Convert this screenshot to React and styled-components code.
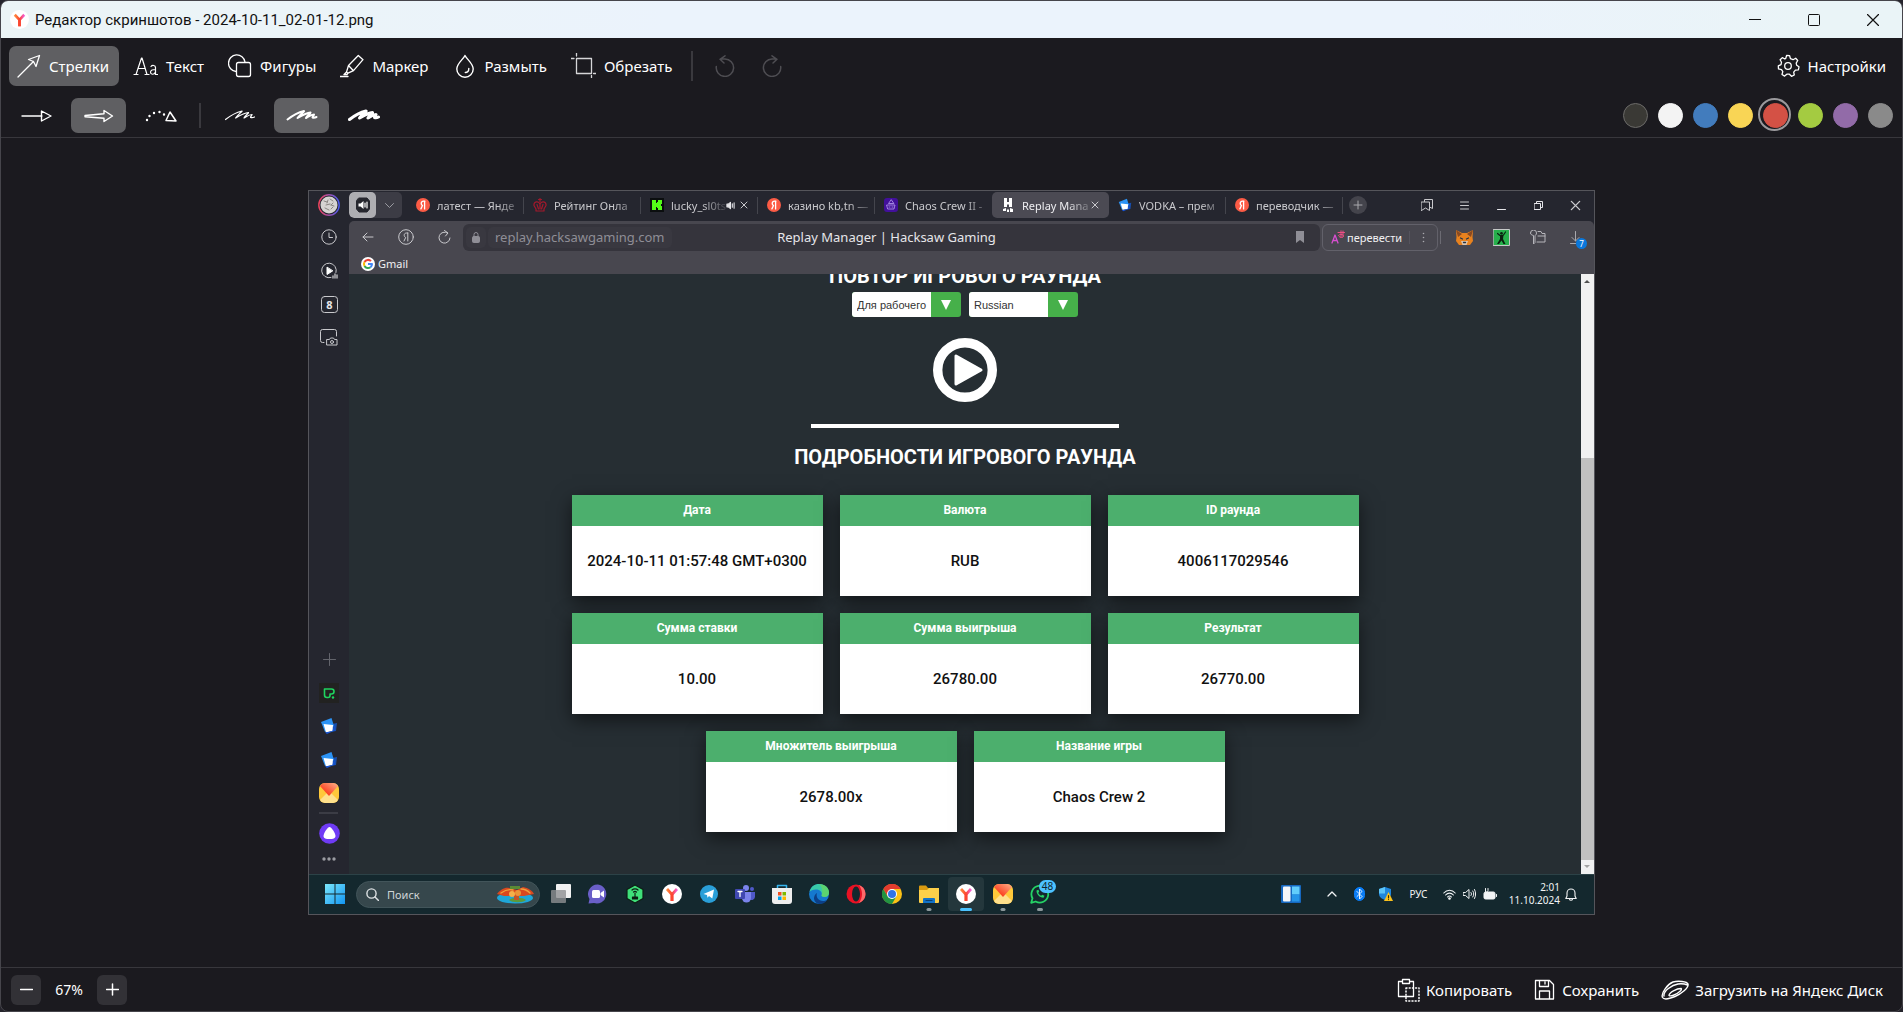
import React from 'react';

import styled, { createGlobalStyle, css } from 'styled-components';

const uiFont = '"Noto Sans", "Open Sans", sans-serif';

const GlobalStyle = createGlobalStyle`
  * {
    box-sizing: border-box;
  }
  body {
    margin: 0;
    background: #25242c;
    font-family: ${uiFont};
  }
  button {
    padding: 0;
    border: 0;
    background: none;
    color: inherit;
    font: inherit;
    cursor: pointer;
  }
  a {
    color: inherit;
    text-decoration: none;
  }
  svg {
    display: block;
    flex: none;
  }
`

/* ---------- editor window ---------- */

const Window = styled.div`
  display: flex;
  flex-direction: column;
  height: 100vh;
  border: 1px solid #46454b;
  border-radius: 8px;
  overflow: hidden;
  background: #1b1a1f;
  color: #fff;
`

const TitleBar = styled.header`
  display: flex;
  align-items: center;
  flex: none;
  height: 37px;
  padding-left: 9px;
  background: linear-gradient(100deg, #ebf4f6 0%, #ebf4f8 15%, #ebf3fc 35%, #ebf3fc 75%, #eaf4f7 95%);
  color: #111;
`

const WindowTitle = styled.h1`
  flex: 1;
  margin: 0 0 0 6px;
  font-family: Roboto, sans-serif;
  font-size: 15px;
  font-weight: 400;
`

const WindowButton = styled.button`
  display: flex;
  align-items: center;
  justify-content: center;
  width: 59px;
  height: 36px;
`

const Toolbars = styled.div`
  flex: none;
  padding: 8px 8px 0;
  height: 100px;
  border-bottom: 1px solid #38373c;
`

const Row = styled.div`
  display: flex;
  align-items: center;
  height: ${props => props.$h}px;
  margin-bottom: 12px;
`

const Tool = styled.button`
  display: flex;
  align-items: center;
  gap: 8px;
  height: 40px;
  margin-right: 6px;
  padding: 0 10px 1px 8px;
  border-radius: 7px;
  font-size: 15px;
  white-space: nowrap;

  ${props => props.$active && css`
    background: #5f5f62;
  `}
`

const Settings = styled(Tool)`
  margin-right: 0;
  padding-right: 8px;
`

const Variant = styled.button`
  display: flex;
  align-items: center;
  justify-content: center;
  width: 55px;
  height: 35px;
  margin-right: 7px;
  border-radius: 7px;

  ${props => props.$active && css`
    background: #5f5f62;
  `}
`

const Divider = styled.span`
  width: 2px;
  height: ${props => props.$h}px;
  margin: 0 ${props => props.$right}px 0 ${props => props.$left}px;
  background: #3a393e;
`

const Spacer = styled.span`
  flex: 1;
`

const HistoryButton = styled.button`
  display: flex;
  align-items: center;
  justify-content: center;
  width: 47px;
  height: 40px;
  color: #4e4d52;
`

const Swatches = styled.div`
  display: flex;
  align-items: center;
  align-self: flex-start;
  gap: 2px;
  margin-right: -2px;
`

const Swatch = styled.button`
  width: 33px;
  height: 33px;
  border: 2px solid ${props => (props.$active ? '#9a999c' : 'transparent')};
  border-radius: 50%;
  padding: 3px;

  &::before {
    content: '';
    display: block;
    width: 23px;
    height: 23px;
    border-radius: 50%;
    background: ${props => props.$color};
    border: 1px solid ${props => props.$edge || props.$color};
  }
`

const Canvas = styled.main`
  display: flex;
  flex: 1;
  align-items: center;
  justify-content: center;
  min-height: 0;
`

const BottomBar = styled.footer`
  display: flex;
  align-items: center;
  flex: none;
  height: 44px;
  padding: 0 19px 0 10px;
  border-top: 1px solid #38373c;
  font-size: 15px;
`

const ZoomButton = styled.button`
  display: flex;
  align-items: center;
  justify-content: center;
  width: 30px;
  height: 30px;
  border-radius: 6px;
  background: #323136;
`

const ZoomValue = styled.output`
  width: 56px;
  text-align: center;
  font-size: 14px;
`

const Action = styled.button`
  display: flex;
  align-items: center;
  gap: 6px;
  margin-left: 22px;
  white-space: nowrap;
`

/* ---------- captured desktop ---------- */

const Shot = styled.section`
  display: flex;
  flex-direction: column;
  width: 67.7%;
  aspect-ratio: 71 / 40;
  border: 1px solid #55555b;
  background: #25262f;
  font-size: 11px;
`

const Browser = styled.div`
  display: flex;
  flex: 1;
  min-height: 0;
`

const SideBar = styled.nav`
  display: flex;
  flex-direction: column;
  flex: none;
  width: 40px;
  background: #25262f;
`

const SideButton = styled.button`
  display: flex;
  align-items: center;
  justify-content: center;
  width: 40px;
  height: ${props => props.$h || 34}px;
`

const SideLine = styled.span`
  width: 19px;
  height: 2px;
  margin: 2px 10px 8px;
  background: #3b3c45;
`

const BrowserMain = styled.div`
  display: flex;
  flex-direction: column;
  flex: 1;
  min-width: 0;
`

const TabStrip = styled.div`
  display: flex;
  align-items: center;
  flex: none;
  height: 30px;
  padding: 0 0 1px;
`

const SoundGroup = styled.div`
  display: flex;
  width: 53px;
  height: 26px;
  margin-right: 5px;
  border-radius: 5px;
  overflow: hidden;
  background: #3c3c45;
`

const SoundButton = styled.button`
  display: flex;
  align-items: center;
  justify-content: center;
  width: ${props => (props.$light ? 27 : 26)}px;
  border-radius: ${props => (props.$light ? 5 : 0)}px;
  background: ${props => (props.$light ? '#aeaeb2' : 'none')};
`

const TabItem = styled.a`
  display: flex;
  align-items: center;
  width: 117px;
  height: 26px;
  padding: 0 3px 0 9px;
  color: #c9c9cd;
  background: linear-gradient(#44454d, #44454d) right center / 1px 17px no-repeat;

  ${props => props.$bare && css`
    background: none;
  `}

  ${props => props.$active && css`
    background: #4b4a53;
    border-radius: 5px;
    color: #ededf0;
  `}
`

const TabText = styled.span`
  flex: 1;
  margin-left: 7px;
  white-space: nowrap;
  mask-image: linear-gradient(90deg, #000 0, #000 calc(100% - 24px), rgba(0, 0, 0, 0.15) 100%);
`

const TabIcons = styled.span`
  display: flex;
  align-items: center;
  gap: 5px;
  margin-right: 7px;
`

const NewTab = styled.button`
  display: flex;
  align-items: center;
  justify-content: center;
  width: 18px;
  height: 18px;
  margin-left: 6px;
  border-radius: 50%;
  background: #44444c;
`

const Cell = styled.button`
  position: relative;
  display: flex;
  align-items: center;
  justify-content: center;
  width: ${props => props.$w || 37}px;
  height: 28px;
`

const Badge = styled.span`
  position: absolute;
  top: 15px;
  left: 19px;
  width: 11px;
  height: 11px;
  border-radius: 50%;
  background: #0a78dc;
  color: #fff;
  font-size: 8px;
  line-height: 11px;
  text-align: center;
`

const NavBar = styled.div`
  display: flex;
  align-items: center;
  flex: none;
  height: 33px;
  background: #48474f;
  border-radius: 5px 5px 0 0;
`

const Address = styled.div`
  display: grid;
  grid-template-columns: 1fr auto 1fr;
  align-items: center;
  flex: 1;
  height: 27px;
  padding: 0 13px 0 3px;
  border-radius: 6px;
  background: #35343c;
  font-size: 13px;
`

const Site = styled.div`
  display: flex;
  align-items: center;
  gap: 2px;
  color: #8f8e96;
`

const LockBox = styled.span`
  display: flex;
  align-items: center;
  justify-content: center;
  width: 20px;
  height: 21px;
  border-radius: 5px;
  background: #393840;
`

const Domain = styled.span`
  padding: 0 7px;
  border-radius: 5px;
  background: #393840;
  line-height: 21px;
`

const AddressTitle = styled.span`
  color: #e6e6ea;
  white-space: nowrap;
`

const AddressMark = styled.button`
  justify-self: end;
`

const Translate = styled.button`
  display: flex;
  align-items: center;
  width: 116px;
  height: 27px;
  margin-left: 2px;
  padding-left: 8px;
  border: 1px solid #62616a;
  border-radius: 6px;
  color: #f0f0f2;
`

const TranslateText = styled.span`
  flex: 1;
  padding-left: 2px;
  text-align: left;
`

const TranslateMore = styled.span`
  display: flex;
  justify-content: center;
  width: 28px;
  border-left: 1px solid #55545d;
`

const NavLine = styled.span`
  width: 1px;
  height: 13px;
  margin: 0 5px 0 2px;
  background: #6c6b73;
`

const Bookmarks = styled.div`
  display: flex;
  align-items: flex-start;
  flex: none;
  height: 20px;
  padding-left: 12px;
  background: #48474f;
`

const Bookmark = styled.a`
  display: flex;
  align-items: center;
  gap: 3px;
  height: 20px;
  color: #f0f0f2;
`

/* ---------- web page ---------- */

const Viewport = styled.div`
  display: flex;
  flex: 1;
  min-height: 0;
`

const Page = styled.div`
  display: flex;
  flex-direction: column;
  align-items: center;
  justify-content: flex-end;
  flex: 1;
  padding-bottom: 42px;
  overflow: hidden;
  background: #262e33;
  font-family: Roboto, sans-serif;
`

const Heading = styled.h2`
  flex: none;
  margin: 0;
  font-size: 20px;
  font-weight: 700;
  line-height: 24px;
  text-transform: uppercase;
`

const Selects = styled.div`
  display: flex;
  flex: none;
  gap: 8px;
  margin: 4px 0 21px;
`

const SelectBox = styled.label`
  display: flex;
  align-items: center;
  width: 109px;
  height: 25px;
  border-radius: 3px;
  overflow: hidden;
  background: #46b04a;
`

const Select = styled.select`
  width: 79px;
  height: 25px;
  padding: 0 0 0 5px;
  border: 0;
  border-radius: 0;
  background: #fff;
  color: #333;
  font: 11px "Liberation Sans", Arial, sans-serif;
  appearance: none;
`

const SelectArrow = styled.svg`
  margin: 0 auto;
`

const PlayButton = styled.button`
  flex: none;
  margin-bottom: 22px;
`

const Rule = styled.hr`
  flex: none;
  width: 25%;
  height: 4px;
  margin: 0 0 17px;
  border: 0;
  background: #fff;
`

const Cards = styled.dl`
  display: flex;
  flex-wrap: wrap;
  flex: none;
  justify-content: center;
  gap: 17px;
  max-width: 800px;
  margin: 26px 0 0;
`

const CardBox = styled.div`
  width: 251px;
  background: #fff;
  box-shadow: 0 6px 18px rgba(0, 0, 0, 0.55);
  text-align: center;
`

const CardLabel = styled.dt`
  background: #4caf6d;
  color: #fff;
  font-size: 12px;
  font-weight: 700;
  line-height: 31px;
`

const CardValue = styled.dd`
  margin: 0;
  color: #111;
  font-size: 15px;
  font-weight: 500;
  line-height: 70px;
`

const ScrollBar = styled.div`
  display: flex;
  flex-direction: column;
  align-items: center;
  justify-content: space-between;
  flex: none;
  width: 13px;
  padding: 6px 0;
  background: #f1f1f1;
`

const Thumb = styled.span`
  flex: 1;
  width: 100%;
  margin: 175px 0 5px;
  background: #c1c1c1;
`

/* ---------- taskbar ---------- */

const TaskBar = styled.div`
  display: flex;
  align-items: center;
  flex: none;
  height: 40px;
  padding: 0 11px 1px 16px;
  border-top: 1px solid #2c4247;
  background: #14282e;
`

const Search = styled.label`
  display: flex;
  align-items: center;
  width: 184px;
  height: 27px;
  margin: 0 3px 0 11px;
  padding: 0 4px 0 9px;
  border: 1px solid #42555a;
  border-radius: 14px;
  background: #36474c;
`

const SearchInput = styled.input`
  flex: 1;
  min-width: 0;
  margin-left: 8px;
  padding: 0;
  border: 0;
  outline: 0;
  background: none;
  color: #fff;
  font: 11px ${uiFont};

  &::placeholder {
    color: #cfd5d7;
    opacity: 1;
  }
`

const Apps = styled.div`
  display: flex;
  width: 515px;
`

const AppButton = styled.button`
  position: relative;
  display: flex;
  flex: 1;
  align-items: center;
  justify-content: center;
  height: 34px;
  border-radius: 4px;

  ${props => props.$active && css`
    background: #24373c;
  `}

  &::after {
    content: '';
    position: absolute;
    bottom: 0;
    left: 50%;
    width: ${props => props.$mark || 0}px;
    height: 3px;
    transform: translateX(-50%);
    border-radius: 2px;
    background: ${props => (props.$active ? '#4cc2ff' : '#8b979a')};
  }
`

const Count = styled.span`
  position: absolute;
  top: 3px;
  right: 2px;
  width: 17px;
  height: 13px;
  border-radius: 7px;
  background: #4cc2ff;
  color: #10242c;
  font-size: 10px;
  line-height: 13px;
`

const Tray = styled.div`
  display: flex;
  align-items: center;
  margin-left: 9px;
`

const Lang = styled.button`
  width: 40px;
  padding-right: 3px;
  color: #f2f4f5;
  font-size: 10px;
`

const Clock = styled.time`
  width: 60px;
  color: #f2f4f5;
  font-size: 10px;
  line-height: 13px;
  text-align: right;
`

/* ---------- icons ---------- */

const Icon = ({ w = 24, h = w, vb = `0 0 ${w} ${h}`, stroke = 'currentColor', sw = 1, fill = 'none', children }) => (
  <svg
    width={w}
    height={h}
    viewBox={vb}
    stroke={stroke}
    strokeWidth={sw}
    fill={fill}
    strokeLinecap="round"
    strokeLinejoin="round"
    aria-hidden="true"
  >
    {children}
  </svg>
)

const YaTab = ({ size = 14 }) => (
  <Icon w={size} vb="0 0 14 14" stroke="none">
    <circle cx="7" cy="7" r="7" fill="#fc5b45" />
    <path d="M8.9 3.2H7.6C6.2 3.2 5.2 4 5.2 5.4c0 1 .5 1.6 1.3 2.1L4.9 10.9M8.6 3.2v7.7" stroke="#fff" strokeWidth="1.3" fill="none" />
  </Icon>
)

const YBrowser = ({ size = 20 }) => (
  <Icon w={size} vb="0 0 20 20" stroke="none">
    <defs>
      <linearGradient id="ybr" x1="0" y1="0" x2="1" y2="0">
        <stop offset="0" stopColor="#ff8a3c" />
        <stop offset="0.5" stopColor="#fb4630" />
        <stop offset="1" stopColor="#f560d8" />
      </linearGradient>
    </defs>
    <circle cx="10" cy="10" r="10" fill="#fff" />
    <path d="M5 5l5 5.5L15 5M10 10.5V17" stroke="url(#ybr)" strokeWidth="2.8" strokeLinecap="butt" fill="none" />
    <path d="M10 10v7" stroke="#fb4630" strokeWidth="2.8" strokeLinecap="butt" />
  </Icon>
)

const BlueCards = ({ size = 18 }) => (
  <Icon w={size} vb="0 0 18 18" stroke="none">
    <path d="M12 7l5-1-1 8-5 1z" fill="#174fb0" />
    <path d="M1 5l10.5-4L14 9l-9 6z" fill="#2c93f5" />
    <path d="M3.5 7l9.5 1-.5 6L6 15.500z" fill="#fff" />
    <path d="M5 15.500l7.500-1.500 2-6 .2 5.500L7 17z" fill="#1554d8" />
  </Icon>
)

const Mail = ({ size = 20 }) => (
  <Icon w={size} vb="0 0 20 20" stroke="none">
    <defs>
      <linearGradient id="mail" x1="0" y1="1" x2="1" y2="0">
        <stop offset="0.3" stopColor="#fb4424" />
        <stop offset="1" stopColor="#ffb08a" />
      </linearGradient>
    </defs>
    <rect width="20" height="20" rx="6" fill="#ffc83a" />
    <path d="M1 17L8 10h4l7 7a6 6 0 0 1-5 3H6a6 6 0 0 1-5-3z" fill="#ffe08c" />
    <path d="M1 3a6 6 0 0 1 5-3h8a6 6 0 0 1 5 3l-9 10z" fill="url(#mail)" />
  </Icon>
)

const Cross = ({ size = 8, color = '#c9c9cd' }) => (
  <Icon w={size} vb="0 0 8 8" stroke={color}><path d="M1 1l6 6M7 1L1 7" /></Icon>
)

const Speaker = ({ size = 9, color = '#e6e6ea' }) => (
  <Icon w={size} vb="0 0 10 10" stroke={color} sw="1.2">
    <path d="M1 3.5h1.500L5 1.500v7L2.500 6.500H1z" fill={color} />
    <path d="M7 3v4M9 2v6" />
  </Icon>
)

const ArrowTool = () => (
  <Icon sw="1.3"><path d="M1 23L16.500 7.500M11.500 5.500L22.500 1.500l-3.500 11-2.500-5z" /></Icon>
)

const TextTool = () => (
  <Icon w={25} h={24} sw="1.2">
    <path d="M1 20.500h4M3 20.500L8.500 4h.5L14 20.500M12 20.500h4M5 14.500h7M18 12.500c1-1.500 4.500-1.500 4.500 1v7h2M22.500 15.500c-2 0-5 .5-5 2.800s3.500 3 5-.3" />
  </Icon>
)

const ShapesTool = () => (
  <Icon sw="1.3">
    <path d="M8 17.500A8.300 8.300 0 1 1 17 8" />
    <rect x="8.500" y="8.500" width="14" height="14" rx="2" />
  </Icon>
)

const MarkerTool = () => (
  <Icon sw="1.3">
    <path d="M0 22.500h8M8.500 11.500L18.300 1.500l4.700 4.200-9.500 11zM8.500 11.500L6.500 18l1.500 1.200 5.500-2.500M6.500 18L4 20.500h3l1-1.300" />
  </Icon>
)

const BlurTool = () => (
  <Icon sw="1.4">
    <path d="M12 1.500C10 5.500 3.800 9.500 3.800 15a8.200 8.200 0 0 0 16.400 0C20.200 9.500 14 5.500 12 1.500z" />
    <path d="M15.800 14.500c0 2.500-1.300 4-3.500 4" />
  </Icon>
)

const CropTool = () => (
  <Icon w={25} h={25} sw="1.3" stroke="#d6d6d8">
    <rect x="5.500" y="5.500" width="15" height="15" />
    <path d="M5.500 0v3M0 5.500h3M20.500 22.500v2.500M22.500 20.500h2.500" />
  </Icon>
)

const Undo = () => (
  <Icon w={20} h={22} sw="1.5">
    <path d="M1.300 11.500a8.700 8.700 0 1 0 8.700-7.500H6M10 .8L5 4.300 9 8" />
  </Icon>
)

const Redo = () => (
  <Icon w={20} h={22} sw="1.5">
    <path d="M18.700 11.500A8.700 8.700 0 1 1 10 4h4M10 .8l5 3.500L11 8" />
  </Icon>
)

const Gear = () => (
  <Icon sw="1.3">
    <circle cx="12" cy="12" r="3.300" />
    <path d="M9.800 4.300L10.600 1.500l3 .2.9 3 2.500 1 2.700-1.500 2 2.300-1.500 2.600.5 2.200 2.300 1.500-.6 3-3 .3-1.700 2 .6 2.900-2.800 1.300-2.100-2.100h-2.600l-2.200 1.900-2.600-1.600.8-2.900-1.300-2-3-.7-.2-3 2.700-1.300.5-2.400-1.400-2.500 2.200-2 2.600 1.300z" />
  </Icon>
)

const Scribble = ({ width }) => (
  <Icon w={32} h={14} sw={width}>
    <path d="M1.500 10.500C6 7 12 3.500 18 2c1 0-4 3.500-6.500 7C15 7 20 4 24.500 3.500 25 4 21.500 6 20 9c2-1 5-3.500 8-3.500.5.5-1.500 1.500-1.500 3 1.500.5 3 0 4-.5" />
  </Icon>
)

const variants = [
  <Icon w={32} h={14} sw="1.4"><path d="M1 7h20M20.500 2v10L30 7z" /></Icon>,
  <Icon w={30} h={14} sw="1.4"><path d="M1 6.500L20 4.800V1.500L28.500 7 20 12.500V9.200L1 7.800z" /></Icon>,
  <Icon w={32} h={14}>
    <path d="M2 11h.01M4.500 7h.01M9 4h.01M14.500 3h.01M19 5.500h.01" strokeWidth="2.400" />
    <path d="M25 3l-4 8.500 10 .5z" strokeWidth="1.500" />
  </Icon>,
]

const colors = ['#3a3935', '#f3f3f3', '#427cbd', '#f9d555', '#d45145', '#a4cb41', '#926ba8', '#8a8a8a']

const tools = [
  ['Стрелки', <ArrowTool />],
  ['Текст', <TextTool />],
  ['Фигуры', <ShapesTool />],
  ['Маркер', <MarkerTool />],
  ['Размыть', <BlurTool />],
  ['Обрезать', <CropTool />],
]

const Crown = () => (
  <Icon w={14} stroke="#a3182c" sw="1.2">
    <path d="M7 3.500V.5M5.500 1.500h3M7 6C5.500 2.500.5 3.500 1 7.500L3 11v2h8v-2l2-3.500C13.500 3.500 8.500 2.500 7 6zM4 6.500L5.500 11M10 6.500L8.500 11M7 6v5" />
  </Icon>
)

const Kick = () => (
  <Icon w={14} stroke="none">
    <rect width="14" height="14" fill="#0b0e0f" />
    <path d="M2 2h4v3h1V4h1V2h4v4h-1v2h1v4H8v-2H7V9H6v3H2z" fill="#53fc18" />
  </Icon>
)

const Chaos = () => (
  <Icon w={14} stroke="#b9a2f0" sw="0.8">
    <rect width="14" height="14" rx="3" fill="#42109b" stroke="none" />
    <path d="M7 2L4.500 5.500h5zM3 7h8l-1 4H4zM5 9h1M8 9h1" />
  </Icon>
)

const Hacksaw = () => (
  <Icon w={14} stroke="none" fill="#fff">
    <path d="M3 0h3v4h2V0h3v9H8V6.500H6V9H3zM2 11l3-1v3H2zM6 11.500h2V14H6zM9 10l3 1v3H9z" />
  </Icon>
)

const tabs = [
  { title: 'латест — Янде', icon: <YaTab /> },
  { title: 'Рейтинг Онла', icon: <Crown /> },
  { title: 'lucky_sl0ts', icon: <Kick />, sound: true, close: true },
  { title: 'казино kb,tn —', icon: <YaTab /> },
  { title: 'Chaos Crew II -', icon: <Chaos />, bare: true },
  { title: 'Replay Mana', icon: <Hacksaw />, active: true, close: true },
  { title: 'VODKA – прем', icon: <BlueCards size={14} /> },
  { title: 'переводчик —', icon: <YaTab /> },
]

const cards = [
  ['Дата', '2024-10-11 01:57:48 GMT+0300'],
  ['Валюта', 'RUB'],
  ['ID раунда', '4006117029546'],
  ['Сумма ставки', '10.00'],
  ['Сумма выигрыша', '26780.00'],
  ['Результат', '26770.00'],
  ['Множитель выигрыша', '2678.00x'],
  ['Название игры', 'Chaos Crew 2'],
]

const apps = [
  { name: 'Task view', icon: (
    <Icon w={20} stroke="none">
      <rect x="5" y="0" width="15" height="14" rx="1" fill="#f1f1f1" />
      <rect x="0" y="6" width="15" height="13" rx="1" fill="#8e9092" fillOpacity="0.8" />
    </Icon>
  ) },
  { name: 'Chat', icon: (
    <Icon w={20} stroke="none">
      <path d="M10 .5A9.500 9.500 0 1 1 6 19l-5.500.5L1.500 15A9.500 9.500 0 0 1 10 .5z" fill="#6a5fc8" />
      <rect x="4" y="6" width="8" height="8" rx="1.500" fill="#fff" />
      <path d="M12.500 9l3.500-2.500v7L12.500 11z" fill="#fff" />
    </Icon>
  ) },
  { name: 'Router', icon: (
    <Icon w={20} stroke="#0d1f14" sw="1.2">
      <path d="M10 1l8 4.500v9L10 19l-8-4.500v-9z" fill="#3fe07a" />
      <path d="M7 6c1.500-1.500 4.500-1.500 6 0M8.500 8c.8-.7 2.200-.7 3 0M10 9v4" />
      <path d="M7.500 13h5v2h-5z" fill="#0d1f14" />
    </Icon>
  ) },
  { name: 'Yandex', icon: <YBrowser /> },
  { name: 'Telegram', icon: (
    <Icon w={18} stroke="none">
      <circle cx="9" cy="9" r="9" fill="#2a9fd8" />
      <path d="M3.500 9L14 4.500 12.300 13.500 9 11 7.500 12.700 7 10z" fill="#fff" />
    </Icon>
  ) },
  { name: 'Teams', icon: (
    <Icon w={20} stroke="none">
      <circle cx="11" cy="4" r="3" fill="#7b83eb" />
      <circle cx="17" cy="5" r="2" fill="#5059c9" />
      <path d="M14 8h6v5a3.500 3.500 0 0 1-6 2z" fill="#5059c9" />
      <path d="M7 8h9v6a4.500 4.500 0 0 1-9 0z" fill="#7b83eb" />
      <rect x="0" y="5" width="10" height="10" rx="1" fill="#4048b0" />
      <path d="M3 7.500h4M5 7.500v5" stroke="#fff" strokeWidth="1.3" />
    </Icon>
  ) },
  { name: 'Store', icon: (
    <Icon w={20} stroke="none">
      <path d="M5.500 5V1.500h9V5" stroke="#36b5ee" strokeWidth="1.5" fill="none" />
      <path d="M0 4h20v13a3 3 0 0 1-3 3H3a3 3 0 0 1-3-3z" fill="#eee" />
      <path d="M6 8h3.500v3.500H6z" fill="#f25022" />
      <path d="M10.500 8H14v3.500h-3.500z" fill="#7fba00" />
      <path d="M6 12.500h3.500V16H6z" fill="#00a4ef" />
      <path d="M10.500 12.500H14V16h-3.500z" fill="#ffb900" />
    </Icon>
  ) },
  { name: 'Edge', icon: (
    <Icon w={20} stroke="none">
      <circle cx="10" cy="10" r="10" fill="#1579cf" />
      <path d="M.5 8C2 2 6 0 10 0c6 0 10 4 10 8.500 0 3-2 4.500-4.500 4.500S12 12 12.800 10.500C13 7 10 5.500 7 5.500S1.500 6.500.5 8z" fill="#38c9a8" />
      <path d="M10 0c6 0 10 4 10 8.500 0 3-2 4.500-4.500 4.500S12 12 12.800 10.500 14 3 10 0z" fill="#6bd858" fillOpacity="0.7" />
      <path d="M8 9c-1.500 4 1.500 8 6 8 1.500 0 3-.5 4-1-2 3-5 4-7.500 4C6 19.500 4 15 5.500 12c.5-1.500 1.500-2.500 2.500-3z" fill="#0c3f86" />
    </Icon>
  ) },
  { name: 'Opera', icon: (
    <Icon w={20} stroke="none">
      <circle cx="10" cy="10" r="9.500" fill="#e81224" />
      <path d="M13 1c4 1.500 6.500 5 6.500 9s-2.500 7.500-6.500 9c2-3 3-6 3-9s-1-6-3-9z" fill="#ff6a6a" />
      <ellipse cx="10" cy="10" rx="4" ry="7.500" fill="#14282e" />
    </Icon>
  ) },
  { name: 'Chrome', icon: (
    <Icon w={20} stroke="none">
      <circle cx="10" cy="10" r="10" fill="#fbc116" />
      <path d="M1.300 5a10 10 0 0 1 17.400 0H10L5.700 12.500z" fill="#e33b2e" />
      <path d="M1.300 5A10 10 0 0 0 10 20l4.300-7.500H5.700z" fill="#229342" />
      <circle cx="10" cy="10" r="5" fill="#fff" />
      <circle cx="10" cy="10" r="4" fill="#2f74e8" />
    </Icon>
  ) },
  { name: 'Explorer', mark: 5, icon: (
    <Icon w={20} stroke="none">
      <path d="M0 2.500a1 1 0 0 1 1-1h6l2 2.500h11v6H0z" fill="#d99a10" />
      <path d="M0 6h8l2-2h10v14a1 1 0 0 1-1 1H1a1 1 0 0 1-1-1z" fill="#fcd04a" />
      <path d="M4 19v-4a1 1 0 0 1 1-1h10a1 1 0 0 1 1 1v4z" fill="#1273c8" />
      <path d="M7 16.500h6" stroke="#0b3f70" strokeWidth="1.2" />
    </Icon>
  ) },
  { name: 'Yandex Browser', mark: 12, active: true, icon: <YBrowser /> },
  { name: 'Mail', mark: 5, icon: <Mail /> },
  { name: 'WhatsApp', mark: 6, count: 48, icon: (
    <Icon w={20} stroke="#25d366" sw="1.8">
      <path d="M1.200 18.800l1.300-4.500A8.400 8.400 0 1 1 5.700 17.500z" />
      <path d="M6.500 6.500c0 4 3 7 7 7.300l1-2-2.300-1-1 1c-1.500-.6-2.500-1.600-3-3l1-1-.8-2z" fill="#25d366" stroke="none" />
    </Icon>
  ) },
]

const EditorToolbars = () => (
  <Toolbars>
    <Row $h={40}>
      {tools.map(([label, icon], i) => (
        <Tool key={label} $active={i === 0}>{icon}{label}</Tool>
      ))}
      <Divider $h={30} $left={3} $right={8} />
      <HistoryButton aria-label="Отменить"><Undo /></HistoryButton>
      <HistoryButton aria-label="Повторить"><Redo /></HistoryButton>
      <Spacer />
      <Settings><Gear />Настройки</Settings>
    </Row>
    <Row $h={35}>
      {variants.map((icon, i) => (
        <Variant key={i} aria-label={`Стрелка ${i + 1}`} $active={i === 1}>{icon}</Variant>
      ))}
      <Divider $h={25} $left={4} $right={11} />
      {[1.2, 2, 3].map((width, i) => (
        <Variant key={width} aria-label={`Толщина ${i + 1}`} $active={i === 1}>
          <Scribble width={width} />
        </Variant>
      ))}
      <Spacer />
      <Swatches>
        {colors.map((color, i) => (
          <Swatch
            key={color}
            aria-label={`Цвет ${i + 1}`}
            $color={color}
            $edge={i === 0 ? '#6b6a68' : undefined}
            $active={i === 4}
          />
        ))}
      </Swatches>
    </Row>
  </Toolbars>
)

const BrowserSide = () => (
  <SideBar>
    <SideButton $h={29} aria-label="Профиль">
      <Icon w={22} stroke="none">
        <defs>
          <linearGradient id="ring" x1="0" y1="0" x2="1" y2="0">
            <stop offset="0" stopColor="#f0435c" />
            <stop offset="1" stopColor="#4b5cf0" />
          </linearGradient>
        </defs>
        <circle cx="11" cy="11" r="10.200" stroke="url(#ring)" strokeWidth="1.4" />
        <circle cx="11" cy="11" r="8.500" fill="#d6d4d2" />
        <path d="M6 7l3 1M12 5l3 2M8 11l4-1M13 11l3 1M7 14l4 2M13 15l2-2M10 6l-1 3M15 9l-2 2" stroke="#8a8683" strokeWidth="1" />
      </Icon>
    </SideButton>
    <SideButton aria-label="История">
      <Icon w={16} stroke="#c9c9cd"><circle cx="8" cy="8" r="7.200" /><path d="M8 4v4.500h3.500" /></Icon>
    </SideButton>
    <SideButton aria-label="Видео">
      <Icon w={18} stroke="#c9c9cd">
        <path d="M11 15.500A7.300 7.300 0 1 1 16 10.500" />
        <path d="M7 5.500v7l5.500-3.500z" fill="#fff" stroke="#fff" />
        <path d="M13 16v-2M15 16v-4M17 16v-3" strokeWidth="1.3" />
      </Icon>
    </SideButton>
    <SideButton $h={33} aria-label="Табло">
      <Icon w={17} stroke="#c9c9cd">
        <rect x="0.500" y="0.500" width="16" height="16" rx="3" />
        <text x="8.500" y="12.500" textAnchor="middle" fontSize="11" fontWeight="700" fill="#e6e6ea" stroke="none">8</text>
      </Icon>
    </SideButton>
    <SideButton aria-label="Скриншот">
      <Icon w={18} h={17} stroke="#c9c9cd">
        <path d="M4 13.500H2.500a2 2 0 0 1-2-2v-9a2 2 0 0 1 2-2h12a2 2 0 0 1 2 2V7" />
        <path d="M7 10.500h2.500l1-1.500h3l1 1.500H17v5.500H7z" /><circle cx="12" cy="13" r="1.500" />
      </Icon>
    </SideButton>
    <Spacer />
    <SideButton $h={33} aria-label="Добавить">
      <Icon w={13} stroke="#63646c"><path d="M6.500.5v12M.5 6.500h12" /></Icon>
    </SideButton>
    <SideButton $h={33} aria-label="Сервис">
      <Icon w={20} stroke="none">
        <rect width="20" height="20" fill="#222221" />
        <path d="M8 14.500a2.500 2.500 0 0 1-2.500-2.500V6h7a2.500 2.500 0 0 1 0 5H11v1.500a2 2 0 0 1-2 2z" stroke="#1fd45f" strokeWidth="1.6" fill="none" />
        <circle cx="14" cy="14.500" r="1.200" fill="#1fd45f" />
      </Icon>
    </SideButton>
    <SideButton aria-label="VODKA"><BlueCards /></SideButton>
    <SideButton $h={33} aria-label="VODKA"><BlueCards /></SideButton>
    <SideButton aria-label="Почта"><Mail /></SideButton>
    <SideLine />
    <SideButton $h={22} aria-label="Алиса">
      <Icon w={21} stroke="none">
        <circle cx="10.500" cy="10.500" r="10.300" fill="#6f3bf5" />
        <path d="M10.500 4c2 0 6 6.500 6 9s-2.500 3-6 3-6-.5-6-3 4-9 6-9z" fill="#fff" />
      </Icon>
    </SideButton>
    <SideButton $h={30} aria-label="Ещё">
      <Icon w={14} h={4} stroke="none" fill="#9b9ca2">
        <circle cx="2" cy="2" r="1.700" /><circle cx="7" cy="2" r="1.700" /><circle cx="12" cy="2" r="1.700" />
      </Icon>
    </SideButton>
  </SideBar>
)

const Tabs = () => (
  <TabStrip>
    <SoundGroup>
      <SoundButton $light aria-label="Звук">
        <Icon w={16} stroke="none">
          <path d="M4 1h8l2.500 3v8L12 15H4l-2.500-3V4z" fill="#26272e" stroke="#26272e" />
          <path d="M3.500 6.500h2l3-2.500v8l-3-2.500h-2z" fill="#fff" />
          <path d="M10 6v4M12 5v6" stroke="#fff" strokeWidth="1.2" />
        </Icon>
      </SoundButton>
      <SoundButton aria-label="Список">
        <Icon w={9} h={5} stroke="#9b9ca2"><path d="M.5.5l4 4 4-4" /></Icon>
      </SoundButton>
    </SoundGroup>
    {tabs.map(({ title, icon, sound, close, active, bare }) => (
      <TabItem key={title} href="#tab" $active={active} $bare={bare}>
        {icon}
        <TabText>{title}</TabText>
        {close && (
          <TabIcons>
            {sound && <Speaker />}
            <Cross />
          </TabIcons>
        )}
      </TabItem>
    ))}
    <NewTab aria-label="Новая вкладка">
      <Icon w={10} stroke="#a9a9ae"><path d="M5 1v8M1 5h8" /></Icon>
    </NewTab>
    <Spacer />
    <Cell aria-label="Закладки">
      <Icon w={12} stroke="#c9c9cd"><path d="M3.500 2.500V.5h8v9L8.500 8M.5 3h8v8.500l-4-2.500-4 2.500z" /></Icon>
    </Cell>
    <Cell aria-label="Меню">
      <Icon w={9} stroke="#c9c9cd"><path d="M.5 1h8M.5 4.500h8M.5 8h8" /></Icon>
    </Cell>
    <Cell aria-label="Свернуть">
      <Icon w={9} stroke="#e6e6ea"><path d="M.5 8.500h8" /></Icon>
    </Cell>
    <Cell aria-label="Окно">
      <Icon w={9} stroke="#e6e6ea"><path d="M2.500 2.500v-2h6v6h-2M.5 2.500h6v6h-6z" /></Icon>
    </Cell>
    <Cell aria-label="Закрыть"><Cross size={11} /></Cell>
  </TabStrip>
)

const Navigation = () => (
  <NavBar>
    <Cell $w={38} aria-label="Назад">
      <Icon w={12} h={10} stroke="#c9c9cd"><path d="M11 5H1M5 1L1 5l4 4" /></Icon>
    </Cell>
    <Cell $w={38} aria-label="Яндекс">
      <Icon w={16} stroke="#c9c9cd">
        <circle cx="8" cy="8" r="7.300" />
        <path d="M9.800 4H8.500C7 4 6.200 5 6.200 6.200c0 1 .5 1.800 1.500 2.300L6 12M9.800 4v8" />
      </Icon>
    </Cell>
    <Cell $w={38} aria-label="Обновить">
      <Icon w={13} h={14} stroke="#c9c9cd"><path d="M9.500 3A5.500 5.500 0 1 0 12 8M6.500.5L10 3 7.500 6" /></Icon>
    </Cell>
    <Address>
      <Site>
        <LockBox>
          <Icon w={8} h={11} stroke="#8f8e96">
            <rect x="0.500" y="4.500" width="7" height="6" rx="1" fill="#8f8e96" />
            <path d="M2 4.500V2.500a2 2 0 0 1 4 0v2" />
          </Icon>
        </LockBox>
        <Domain>replay.hacksawgaming.com</Domain>
      </Site>
      <AddressTitle>Replay Manager | Hacksaw Gaming</AddressTitle>
      <AddressMark aria-label="В закладки">
        <Icon w={14} h={12} stroke="none"><path d="M3 0h8v12L7 9l-4 3z" fill="#8f8e96" /></Icon>
      </AddressMark>
    </Address>
    <Translate>
      <Icon w={14} stroke="#e04fb0" sw="1.3">
        <path d="M1 13l3-8 3 8M2 10.500h4" stroke="#d84fd0" />
        <path d="M7 2.500h6.500M10 .8v6M7.500 5.500c0-1.500 5-1.500 5 .5S9 8 8 6.500M12 1v5" strokeWidth="1" stroke="#f04f86" />
      </Icon>
      <TranslateText>перевести</TranslateText>
      <TranslateMore>
        <Icon w={3} h={13} stroke="none" fill="#a9a9ae">
          <circle cx="1.500" cy="2.500" r="0.800" /><circle cx="1.500" cy="6.500" r="0.800" /><circle cx="1.500" cy="10.500" r="0.800" />
        </Icon>
      </TranslateMore>
    </Translate>
    <NavLine />
    <Cell aria-label="MetaMask">
      <Icon w={17} h={15} stroke="none">
        <path d="M0 0l6 3h5l6-3-.5 7 .5 4-3 4H3l-3-4 .5-4z" fill="#e8821e" />
        <path d="M0 0l6 4-4 3zM17 0l-6 4 4 3z" fill="#8a4a22" />
        <path d="M5 11h7l-1.500 4h-4z" fill="#d9c4b0" />
        <path d="M4.500 8l2 1M12.500 8l-2 1M7.500 12.500h2" stroke="#233447" strokeWidth="1.3" />
      </Icon>
    </Cell>
    <Cell aria-label="Расширение">
      <Icon w={17} stroke="none">
        <rect x="0.500" y="0.500" width="16" height="16" fill="#27b04c" stroke="#c6c9c8" />
        <path d="M4.500 4.500L7 6.500l3.500-.5L12.500 3" stroke="#0b1f10" strokeWidth="1.2" fill="none" />
        <circle cx="8.500" cy="4.200" r="1.300" fill="#0b1f10" />
        <path d="M7 6h3.500l-.5 4 2.500 5h-2L8.500 11.500 6 15H4l3-5z" fill="#0b1f10" />
      </Icon>
    </Cell>
    <Cell aria-label="Пароли">
      <Icon w={16} h={15} stroke="#b5b5ba">
        <path d="M.5 3A2.500 2.500 0 0 1 6.500 3c0 1.500-.7 2-1.500 2.500v7L3.500 14V5.500C1.500 5 .5 4.500.5 3z" />
        <path d="M8 1.500h3l1 2h3v8.500H7M8 6h7" />
      </Icon>
    </Cell>
    <Cell aria-label="Загрузки">
      <Icon w={11} h={13} stroke="#a9a9ae"><path d="M5.500.5v9.500M2 6.500l3.500 3.500L9 6.500M.5 12.500h10" /></Icon>
      <Badge>7</Badge>
    </Cell>
  </NavBar>
)

const Dropdown = ({ label, value }) => (
  <SelectBox>
    <Select aria-label={label} defaultValue={value}>
      <option>{value}</option>
    </Select>
    <SelectArrow width="10" height="10" viewBox="0 0 10 10">
      <path d="M0 0h10L5 10z" fill="#fff" />
    </SelectArrow>
  </SelectBox>
)

const ReplayPage = () => (
  <Viewport>
    <Page>
      <Heading>Повтор игрового раунда</Heading>
      <Selects>
        <Dropdown label="Устройство" value="Для рабочего" />
        <Dropdown label="Язык" value="Russian" />
      </Selects>
      <PlayButton aria-label="Воспроизвести">
        <Icon w={64} stroke="#fff">
          <circle cx="32" cy="32" r="27.300" strokeWidth="9.400" />
          <path d="M23 18v28l25-14z" fill="#fff" strokeWidth="3" />
        </Icon>
      </PlayButton>
      <Rule />
      <Heading>Подробности игрового раунда</Heading>
      <Cards>
        {cards.map(([label, value]) => (
          <CardBox key={label}>
            <CardLabel>{label}</CardLabel>
            <CardValue>{value}</CardValue>
          </CardBox>
        ))}
      </Cards>
    </Page>
    <ScrollBar>
      <Icon w={6} h={3} stroke="none" fill="#505050"><path d="M0 3h6L3 0z" /></Icon>
      <Thumb />
      <Icon w={6} h={3} stroke="none" fill="#a3a3a3"><path d="M0 0h6L3 3z" /></Icon>
    </ScrollBar>
  </Viewport>
)

const WindowsTaskBar = () => (
  <TaskBar>
    <button aria-label="Пуск">
      <Icon w={20} stroke="none">
        <defs>
          <linearGradient id="win" x1="0" y1="0" x2="1" y2="1">
            <stop offset="0" stopColor="#7ce8fb" />
            <stop offset="1" stopColor="#1295f2" />
          </linearGradient>
        </defs>
        <path d="M0 0h9.500v9.500H0zM10.500 0H20v9.500h-9.500zM0 10.500h9.500V20H0zM10.500 10.500H20V20h-9.500z" fill="url(#win)" />
      </Icon>
    </button>
    <Search>
      <Icon w={13} stroke="#dfe3e5" sw="1.4"><circle cx="5.500" cy="5.500" r="4.600" /><path d="M9 9l3.500 3.500" /></Icon>
      <SearchInput placeholder="Поиск" aria-label="Поиск" />
      <Icon w={39} h={19} stroke="none">
        <ellipse cx="19" cy="13" rx="18" ry="5.500" fill="#1fa6d8" />
        <path d="M1 9C4 5 9 2 13 3l8 2 6-3c5 1 10 4 11 7l-10 2H8z" fill="#d9481f" />
        <path d="M5 8c4-3 8-4 12-3M25 4c4 0 7 2 9 4" stroke="#f0a23c" strokeWidth="1.3" fill="none" />
        <path d="M14 1h10v3H14z" fill="#5a8a35" />
        <circle cx="16" cy="9" r="3" fill="#f2b04a" />
        <circle cx="22" cy="8" r="3" fill="#e9953a" />
        <path d="M13 15c3-3 14-3 17 0-3 3-14 3-17 0z" fill="#5d9a3c" />
        <path d="M18 11h5v4h-5z" fill="#c2542a" />
      </Icon>
    </Search>
    <Apps>
      {apps.map(({ name, icon, active, mark, count }) => (
        <AppButton key={name} aria-label={name} $active={active} $mark={mark}>
          {icon}
          {count && <Count>{count}</Count>}
        </AppButton>
      ))}
    </Apps>
    <Spacer />
    <Cell aria-label="Виджеты">
      <Icon w={20} h={18} stroke="none">
        <rect width="20" height="18" rx="1" fill="#1668c0" />
        <rect x="2" y="1.500" width="7.500" height="15" rx="1" fill="#f3f6f9" />
        <rect x="11" y="1.500" width="7.500" height="8" fill="#62cdfb" />
        <rect x="11" y="9.500" width="7.500" height="7" fill="#2595e8" />
      </Icon>
    </Cell>
    <Tray>
      <Cell $w={27} aria-label="Скрытые значки">
        <Icon w={10} h={6} stroke="#f2f4f5" sw="1.3"><path d="M1 5l4-4 4 4" /></Icon>
      </Cell>
      <Cell $w={27} aria-label="Bluetooth">
        <Icon w={11} h={14} stroke="#fff">
          <rect x="0.500" y="0.500" width="10" height="13" rx="5" fill="#0a7cf5" stroke="#0a7cf5" />
          <path d="M3 4.500l5 5L5.500 12V2L8 4.500l-5 5" strokeWidth="0.900" />
        </Icon>
      </Cell>
      <Cell $w={27} aria-label="Безопасность">
        <Icon w={14} stroke="none">
          <path d="M6 0l6 2v5c0 3-3 5-6 6-3-1-6-3-6-6V2z" fill="#1f86dc" />
          <path d="M6 0v6.500H0V2z" fill="#5cc4f7" />
          <path d="M9.500 5l4.500 9H5z" fill="#fbc21c" />
          <path d="M9.500 8.500v2.500M9.500 12.500v.1" stroke="#3a2b00" strokeWidth="1.1" />
        </Icon>
      </Cell>
      <Lang>РУС</Lang>
      <Cell $w={20} aria-label="Wi-Fi">
        <Icon w={13} h={11} stroke="#f2f4f5" sw="1.1">
          <path d="M.8 4c3.200-3.700 8.200-3.700 11.400 0M2.600 6c2.200-2.500 5.600-2.500 7.800 0M4.500 8c1.200-1.300 2.800-1.300 4 0" />
          <circle cx="6.500" cy="9.500" r="0.800" fill="#f2f4f5" />
        </Icon>
      </Cell>
      <Cell $w={20} aria-label="Громкость">
        <Icon w={13} h={12} stroke="#f2f4f5">
          <path d="M.5 4.500h2L6 1.500v9L2.500 7.500h-2zM8 4.500c.7 1 .7 2 0 3M9.800 3c1.300 2 1.300 4 0 6M11.500 1.500c1.500 3 1.500 6 0 9" />
        </Icon>
      </Cell>
      <Cell $w={20} aria-label="Батарея">
        <Icon w={14} h={12} stroke="#f2f4f5">
          <rect x="1" y="4" width="11" height="7" rx="1.500" fill="#f2f4f5" />
          <path d="M13.500 6.500v2M2.500.5v3M5 .5v2L3 5" />
        </Icon>
      </Cell>
      <Clock>2:01<br />11.10.2024</Clock>
      <Cell $w={23} aria-label="Уведомления">
        <Icon w={12} h={13} stroke="#f2f4f5" sw="1.1">
          <path d="M6 1a4 4 0 0 0-4 4v3L.8 10.500h10.400L10 8V5a4 4 0 0 0-4-4zM4.500 11.500c.5 1 2.500 1 3 0" />
        </Icon>
      </Cell>
    </Tray>
  </TaskBar>
)

const App = () => (
  <Window>
    <GlobalStyle />
    <TitleBar>
      <YBrowser size={19} />
      <WindowTitle>Редактор скриншотов - 2024-10-11_02-01-12.png</WindowTitle>
      <WindowButton aria-label="Свернуть">
        <Icon w={12}><path d="M0 5.500h12" /></Icon>
      </WindowButton>
      <WindowButton aria-label="Развернуть">
        <Icon w={12}><rect x="0.500" y="0.500" width="11" height="11" rx="1" /></Icon>
      </WindowButton>
      <WindowButton aria-label="Закрыть">
        <Icon w={12} sw="1.2"><path d="M.5.5l11 11M11.500.5l-11 11" /></Icon>
      </WindowButton>
    </TitleBar>
    <EditorToolbars />
    <Canvas>
      <Shot>
        <Browser>
          <BrowserSide />
          <BrowserMain>
            <Tabs />
            <Navigation />
            <Bookmarks>
              <Bookmark href="#gmail">
                <Icon w={14} stroke="none">
                  <circle cx="7" cy="7" r="7" fill="#fff" />
                  <path d="M10 4.200A4 4 0 0 0 3.500 5" stroke="#ea4335" strokeWidth="2" strokeLinecap="butt" fill="none" />
                  <path d="M3.500 5a4 4 0 0 0 0 4" stroke="#fbbc05" strokeWidth="2" strokeLinecap="butt" fill="none" />
                  <path d="M3.500 9A4 4 0 0 0 9.500 10.200" stroke="#34a853" strokeWidth="2" strokeLinecap="butt" fill="none" />
                  <path d="M9.500 10.200A4 4 0 0 0 11 7H7" stroke="#4285f4" strokeWidth="2" strokeLinecap="butt" fill="none" />
                </Icon>
                Gmail
              </Bookmark>
            </Bookmarks>
            <ReplayPage />
          </BrowserMain>
        </Browser>
        <WindowsTaskBar />
      </Shot>
    </Canvas>
    <BottomBar>
      <ZoomButton aria-label="Уменьшить">
        <Icon w={13} sw="1.5"><path d="M.5 6.500h12" /></Icon>
      </ZoomButton>
      <ZoomValue>67%</ZoomValue>
      <ZoomButton aria-label="Увеличить">
        <Icon w={13} sw="1.5"><path d="M.5 6.500h12M6.500 1v11" /></Icon>
      </ZoomButton>
      <Spacer />
      <Action>
        <Icon w={23} h={24} sw="1.3">
          <path d="M5.500 3.500h-4v15h15v-15h-4M5.500 1.500h7v4h-7z" />
          <path d="M9 10h13v13H9z" strokeDasharray="1 2.200" strokeWidth="1.5" />
        </Icon>
        Копировать
      </Action>
      <Action>
        <Icon w={22} h={22} sw="1.3">
          <path d="M1.500 1.500h14l4 4v14.500h-18zM5.500 1.500v6h9v-6M11 3v2M5.500 20v-8h10v8" />
        </Icon>
        Сохранить
      </Action>
      <Action>
        <Icon w={28} h={20} sw="1.4">
          <path d="M1.500 17.500C-.5 13 7 4 12 2c5-1.500 14-.5 15 2 1 4-7 10-13 12.500S3 20 1.500 17.500zM3 16c-1-5 8-11 14-12 4-.5 7 0 9.500 1" />
          <path d="M8 15.500c0-3 8-7 12-7 2 1-3 5-7 6.500-2 .8-4 1.200-5 .5z" />
        </Icon>
        Загрузить на Яндекс Диск
      </Action>
    </BottomBar>
  </Window>
)

export default App;
